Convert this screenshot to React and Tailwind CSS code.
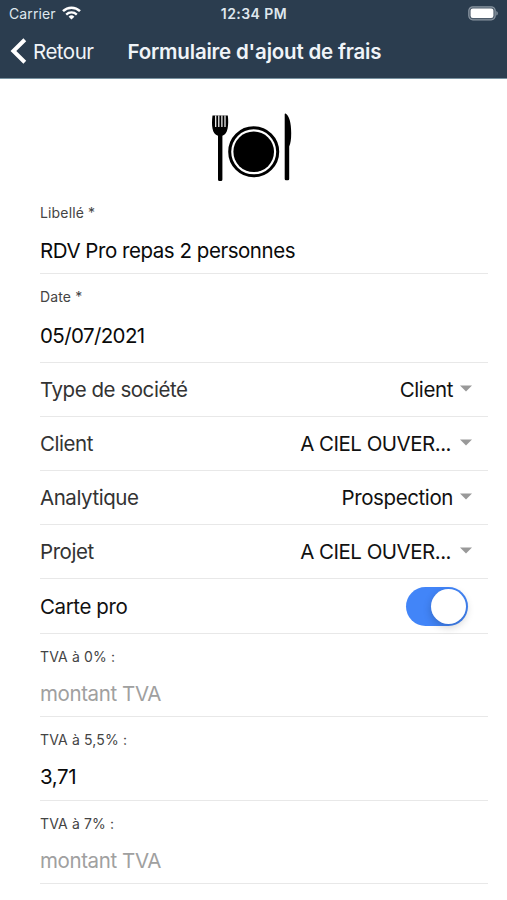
import React from "react";

function StatusBar() {
  return (
    <div className="flex h-[27px] items-center pr-[8px] pl-[9px] text-[14px] text-[#dfe7ee]">
      <div className="flex flex-1 items-center gap-[6px]">
        <span className="-mt-px tracking-[0.1px]">Carrier</span>
        <svg width="19" height="14" viewBox="0 0 19 14" fill="none" stroke="#fff" className="-mt-px">
          <path d="M1 5.2a12.2 12.2 0 0 1 17 0" strokeWidth="2.5" />
          <path d="M4.2 8.6a7.6 7.6 0 0 1 10.6 0" strokeWidth="2.3" />
          <path d="M9.5 13.6 6.6 10.7a4.1 4.1 0 0 1 5.8 0z" fill="#fff" stroke="none" />
        </svg>
      </div>
      <span className="font-semibold tracking-[0.45px]">12:34 PM</span>
      <div className="flex flex-1 justify-end">
        <svg width="30" height="15" viewBox="0 0 30 15" className="mr-px">
          <rect x="0.8" y="0.8" width="26.4" height="13" rx="4" fill="#4d5c6b" stroke="#8995a1" strokeWidth="1.2" />
          <rect x="2.6" y="2.6" width="22.8" height="9.4" rx="2.2" fill="#fff" />
          <path d="M28.3 5v4.6c1.100-.4 1.500-1.300 1.500-2.300s-.4-1.900-1.500-2.300z" fill="#8995a1" />
        </svg>
      </div>
    </div>
  );
}

function Header() {
  return (
    <header className="h-[79px] border-b border-[#7892a0] bg-[#2b3d4f]">
      <StatusBar />
      <div className="flex h-[50px] items-center pl-[10px] text-[20.5px] text-[#f0f4f8]">
        <svg width="17" height="26" viewBox="0 0 17 26" fill="none" stroke="#fff" strokeWidth="4" className="-mt-[2px]">
          <path d="M14.8 1.8 3.4 13l11.4 11.2" />
        </svg>
        <span className="ml-[6px] w-[94.5px] tracking-[-0.5px]">Retour</span>
        <h1 className="font-semibold tracking-[-0.2px] whitespace-nowrap">Formulaire d'ajout de frais</h1>
      </div>
    </header>
  );
}

function MealIcon() {
  return (
    <svg width="84" height="70" viewBox="0 0 84 70" className="ml-[211px]">
      <path d="M1.500 2.500h15.300c.6 5 .6 9-.2 13-.8 4-2.400 6-5.200 7.300V66.500a1.500 1.500 0 0 1-1.500 1.500H8.500a1.500 1.500 0 0 1-1.500-1.500V22.800C4 21.500 2.200 19.500 1.500 15.500 .8 11.500 .9 7.500 1.500 2.500z" />
      <path d="M4.700 2.500v11.500M7.800 2.500v11.500M10.900 2.500v11.500M14 2.500v11.500" stroke="#fff" strokeWidth="1.200" />
      <circle cx="42.700" cy="38.800" r="24" fill="none" stroke="#000" strokeWidth="3" />
      <circle cx="42.700" cy="38.800" r="20.300" />
      <path d="M74.500 .6c3.800 2.200 5.700 9.500 5.700 19.500 0 6.500-.6 10.500-2 13.500V66a1.300 1.300 0 0 1-1.300 1.300h-1.900a1.300 1.300 0 0 1-1.300-1.300V1.300c0-.5.300-.9.800-.7z" />
    </svg>
  );
}

function Field({ label, value, placeholder, className, valueClass = "tracking-[-0.4px]" }) {
  return (
    <div className={`flex flex-col border-b border-[#e8e8e8] ${className}`}>
      <div className="h-[20px] text-[14px] leading-[20px] tracking-[0.15px] text-[#444]">{label}</div>
      <div className={`mt-auto h-[28px] text-[20.5px] leading-[28px] ${valueClass} ${value ? "text-[#0a0a0a]" : "text-[#a0a0a0]"}`}>
        {value || placeholder}
      </div>
    </div>
  );
}

function SelectRow({ label, value, clipped }) {
  return (
    <div className="flex h-[54.200px] items-center border-b border-[#e8e8e8] pt-[2px] pr-[16px] text-[20.5px]">
      <span className="flex-1 tracking-[-0.45px] text-[#333]">{label}</span>
      <span className={`text-[#111] ${clipped ? "mr-[9px] tracking-[-0.5px]" : "mr-[7px] tracking-[-0.4px]"}`}>{value}</span>
      <svg width="12" height="7" viewBox="0 0 12 7" className="-mt-[4px]">
        <path d="M0 .5h12L6 6.500z" fill="#999" />
      </svg>
    </div>
  );
}

export default function App() {
  return (
    <div className="h-[900px] w-[507px] overflow-hidden bg-white font-['Inter','Liberation_Sans',sans-serif]">
      <Header />
      <div className="flex h-[124px] items-start pt-[34px]">
        <MealIcon />
      </div>
      <main className="mr-[19px] ml-[40px]">
        <Field label="Libellé *" value="RDV Pro repas 2 personnes" className="h-[71px] pb-[8px]" valueClass="tracking-[-0.46px]" />
        <Field label="Date *" value="05/07/2021" className="h-[88.600px] pt-[13px] pb-[12px]" valueClass="tracking-[-0.6px]" />
        <SelectRow label="Type de société" value="Client" />
        <SelectRow label="Client" value="A CIEL OUVER..." clipped />
        <SelectRow label="Analytique" value="Prospection" />
        <SelectRow label="Projet" value="A CIEL OUVER..." clipped />
        <div className="flex h-[54.200px] items-center justify-between border-b border-[#e8e8e8] pt-[2px] pr-[20px] text-[20.5px] text-[#111]">
          <span className="tracking-[-0.4px]">Carte pro</span>
          <div className="flex h-[39px] w-[62.5px] items-center justify-end rounded-full bg-[#4285f8] pr-[2px]">
            <div className="h-[35px] w-[35px] rounded-full bg-white shadow-[0_3px_9px_rgba(0,0,0,0.2)]" />
          </div>
        </div>
        <Field label="TVA à 0% :" placeholder="montant TVA" className="h-[83.500px] pt-[13px] pb-[8.500px]" />
        <Field label="TVA à 5,5% :" value="3,71" className="h-[83.500px] pt-[13px] pb-[8.500px]" />
        <Field label="TVA à 7% :" placeholder="montant TVA" className="h-[83.500px] pt-[13px] pb-[8.500px]" />
      </main>
    </div>
  );
}
